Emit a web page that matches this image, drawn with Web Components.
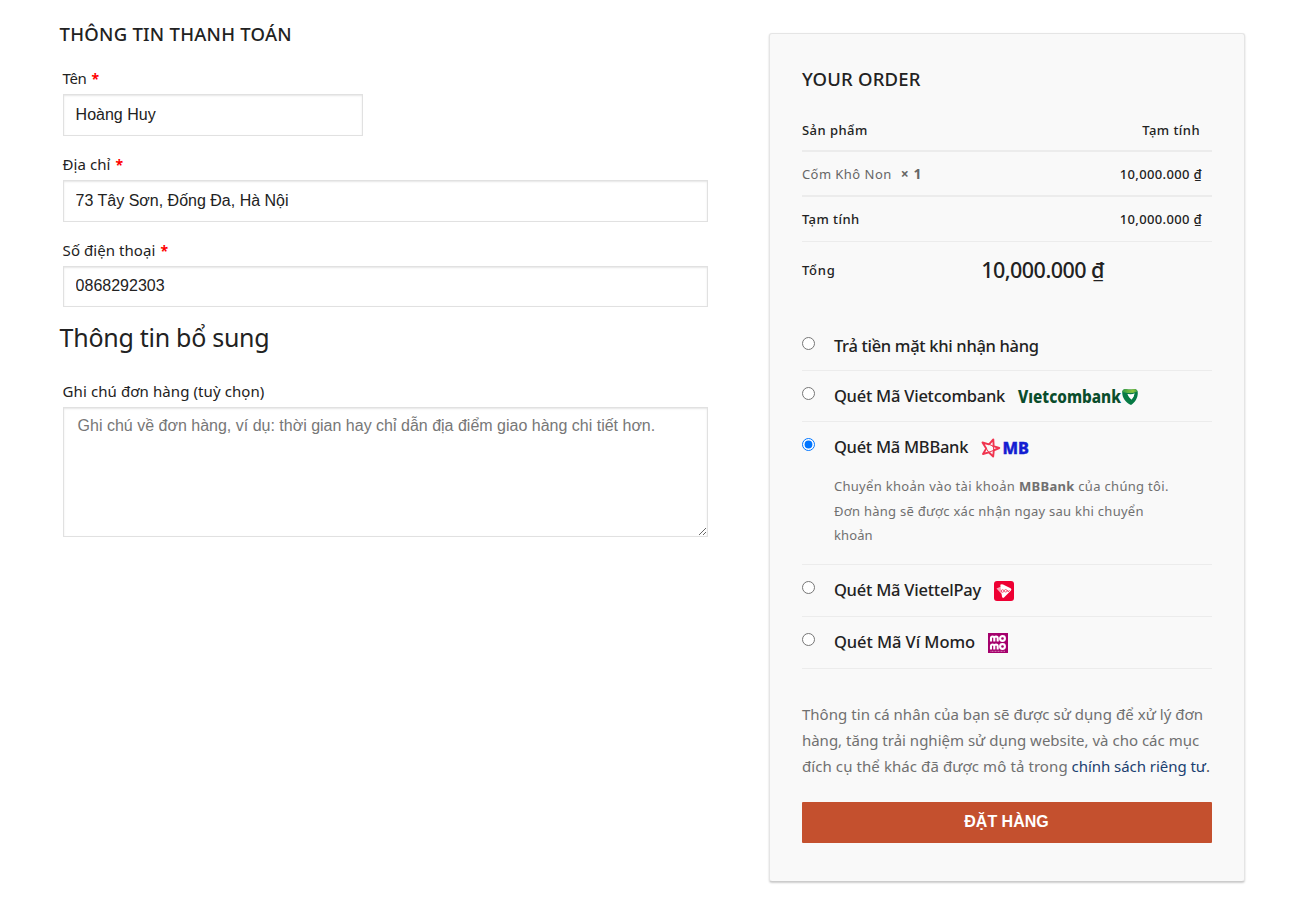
<!DOCTYPE html>
<html lang="vi">
<head>
<meta charset="utf-8">
<title>Thanh toán</title>
<style>
html,body{margin:0;padding:0;background:#fff}
body{font-family:"Noto Sans","Open Sans",sans-serif;color:#222;height:900px;overflow:hidden}
</style>
</head>
<body>
<checkout-page></checkout-page>
<script>
const define=(name,html,setup)=>customElements.define(name,class extends HTMLElement{
  connectedCallback(){
    if(this.shadowRoot)return;
    const t=document.createElement('template');
    t.innerHTML=html;
    this.attachShadow({mode:'open'}).append(t.content.cloneNode(true));
    if(setup)setup(this,this.shadowRoot);
  }
});

/* A single line of text tracked to the width given in "w". */
define('fit-text',`<style>:host{display:inline-block;white-space:nowrap;margin-left:var(--nudge,-.4px)}span{display:inline-block}</style><span><slot></slot></span>`,(el,root)=>{
  queueMicrotask(()=>{
    const s=root.querySelector('span'),n=[...el.textContent].length,w=+el.getAttribute('w')-.2;
    s.style.letterSpacing='0px';
    s.style.letterSpacing=((w-s.getBoundingClientRect().width)/n).toFixed(3)+'px';
    s.style.width=w+'px';
  });
});

define('form-field',`<style>
:host{display:block;padding:0 3px}
.l{display:block;font-size:15px;line-height:24px;height:28px}
.l b{color:#f00;margin-left:5px;font-size:14px}
input,textarea{display:block;box-sizing:border-box;width:var(--w,100%);height:var(--h,42px);margin:0;border:1px solid #e1e1e1;border-radius:0;
 background:#fff;color:#222;font:16px/20px "Liberation Sans",Arial,sans-serif;padding:0 11.600px 1px;box-shadow:inset 0 1px 2px rgba(0,0,0,.1);outline:0}
textarea{padding:8px 13.600px;line-height:20px;resize:both}
::placeholder{color:#777;opacity:1}
</style><label class="l"><slot></slot></label>`,(el,root)=>{
  if(el.hasAttribute('required')){const b=document.createElement('b');b.textContent='*';root.querySelector('label').append(b)}
  const area=el.hasAttribute('placeholder'),c=document.createElement(area?'textarea':'input');
  if(area)c.placeholder=el.getAttribute('placeholder');else c.value=el.getAttribute('value');
  root.append(c);
});

define('order-row',`<style>
:host{display:flex;justify-content:space-between;align-items:center;box-sizing:border-box;font-size:13px;line-height:20px;font-weight:500;border-bottom:1px solid #ececec}
</style><slot></slot>`);

define('pay-option',`<style>
:host{display:block;border-bottom:1px solid #ececec;box-sizing:border-box}
.r{display:flex;align-items:flex-start}
input{width:13px;height:13px;margin:var(--rt,16px) 19px 0 0;flex:none}
.t{display:flex;align-items:center;gap:13px;font-size:16.500px;font-weight:500;line-height:26px;margin-top:var(--tt,12px)}
::slotted([slot=logo]){margin-top:2px}
.d{margin:14px 0 0 32px;font-size:13px;line-height:24.500px;color:#707070}
</style><div class="r"><input type="radio" name="p"><div class="t"><slot></slot><slot name="logo"></slot></div></div><div class="d"><slot name="note"></slot></div>`,(el,root)=>{
  root.querySelector('input').checked=el.hasAttribute('checked');
  if(!el.querySelector('[slot=note]'))root.querySelector('.d').remove();
});

const svg=(w,h,body)=>`<style>:host{display:block;height:${h}px}svg{display:block;overflow:visible}</style><svg width="${w}" height="${h}" viewBox="0 0 ${w} ${h}">${body}</svg>`;

define('vcb-logo',svg(120,18,`
<defs><linearGradient id="g" x1="0" x2="1"><stop offset="0" stop-color="#2f9a45"/><stop offset=".7" stop-color="#8dc63f"/><stop offset="1" stop-color="#3c9b45"/></linearGradient></defs>
<text x="0" y="15" font-family="Noto Sans" font-weight="800" font-size="17" fill="#0a4d2c" textLength="103" lengthAdjust="spacingAndGlyphs">Vıetcombank</text>
<path fill="#077a45" fill-rule="evenodd" d="M104.200 4 Q104.500 1.200 108 1 Q112 2 116 1 Q119.800 1 119.800 5 C119.800 10 117 14.500 113 17 C107.500 14.500 104.200 10 104.200 4 Z M109.500 6 Q110.500 9 113.500 11.500 Q115.800 9 116.500 5.500 Q113 7 109.500 6Z"/>
<path fill="url(#g)" d="M104.200 4 Q104.500 1.200 108 1 Q112 2 116 1 Q119 1 119.500 3.500 Q113 6 107 4.500 Z"/>
<path fill="#fff" d="M109.500 6 Q110.500 9 113.500 11.500 Q115.800 9 116.500 5.500 Q113 7 109.500 6Z"/>`));

define('mb-logo',svg(48,20,`
<g fill="none" stroke="#f0344f" stroke-width="1.900" stroke-linejoin="round" stroke-linecap="round"><path d="M1.500 4.500 L8 6.300 M8 6.300 L12.300 1.500 L12.600 7 M12.300 8.200 L18.300 10 L13.500 12 M12.800 12.300 L12.200 18.500 L8.500 15 M7.800 14.300 L2 16 L4.500 11.800 M5.200 10.500 L1.500 4.500"/><path stroke-width="1" d="M8 6.300 L12.300 8.200 L12.800 12.300 L7.800 14.300 L5.200 10.500"/></g>
<text x="21.500" y="15.500" font-family="Noto Sans" font-weight="800" font-size="16" fill="#141ed2" stroke="#141ed2" stroke-width=".4" textLength="26.500" lengthAdjust="spacingAndGlyphs">MB</text>`));

define('viettel-logo',svg(20,20,`
<rect width="20" height="20" rx="3" fill="#ee0033"/>
<path fill="#fff" d="M6.300 3.800 Q7.500 2.700 9 3.500 L16.600 7.300 Q18 8.300 17 9.500 L10 16.600 Q8.500 17.600 8 15.800Z"/>
<path fill="#fff" opacity=".65" d="M2.500 7.500 L7 5.500 L8 13.500Z"/>
<g fill="none" stroke="#ee0033" stroke-width=".6"><circle cx="8.600" cy="10" r="1.300"/><circle cx="11.700" cy="9.800" r="1.300"/><path d="M13.200 9 l1 2 l1.300 -2"/></g>`));

define('momo-logo',svg(20,20,`
<rect width="20" height="20" fill="#a5006c"/>
<g fill="none" stroke="#fff" stroke-width="2.100"><path d="M3 8.500 V5 Q3 3.500 4.600 3.500 T6.300 5 V8.500 M6.300 5 Q6.300 3.500 8 3.500 T9.700 5 V8.500"/><circle cx="14.500" cy="5.500" r="2.400"/><path d="M3 16.500 V13 Q3 11.500 4.600 11.500 T6.300 13 V16.500 M6.300 13 Q6.300 11.500 8 11.500 T9.700 13 V16.500"/><circle cx="14.500" cy="13.500" r="2.400"/></g>
<path d="M2.500 18.300H17.500" stroke="#e3a6cb" stroke-width=".8" stroke-dasharray="1 .5"/>`));

define('order-card',`<style>
:host{--nudge:-.1px;display:block;box-sizing:border-box;width:476px;height:849px;margin-top:33px;border:1px solid #e5e5e5;border-bottom-color:#ccc;border-radius:3px;background:#f9f9f9;padding:32px;box-shadow:0 1px 2px rgba(0,0,0,.2)}
h3{margin:0;font-size:18.500px;font-weight:500;line-height:26px;height:44px}
.grey{color:#666;font-weight:400}.grey b{margin-left:9px;font-size:14px;letter-spacing:.6px}
.p{margin:32px 0 0;font-size:15px;line-height:26px;color:#707070}
.a{color:#1b3f70}.dot{color:#555}
button{display:block;width:410px;height:41px;margin:23px 0 0;padding:0 1px 2px 0;border:0;border-radius:1px;background:#c4502e;color:#fff;font:bold 16px "Liberation Sans",Arial,sans-serif}
</style>
<h3><fit-text w="119">YOUR ORDER</fit-text></h3>
<order-row style="height:42px;border-bottom-width:2px;padding-right:12px"><fit-text w="66">Sản phẩm</fit-text><fit-text w="58">Tạm tính</fit-text></order-row>
<order-row style="height:45px;border-bottom-width:2px;padding-right:10px"><span class="grey"><fit-text w="90">Cốm Khô Non</fit-text><b>× 1</b></span><fit-text w="82.500">10,000.000 ₫</fit-text></order-row>
<order-row style="height:45px;padding-right:10px"><fit-text w="58">Tạm tính</fit-text><fit-text w="82.500">10,000.000 ₫</fit-text></order-row>
<order-row style="height:78px;border:0;padding:0 108px 22px 0"><fit-text w="34">Tổng</fit-text><fit-text w="123" style="font-size:21.5px">10,000.000 ₫</fit-text></order-row>
<pay-option style="height:51px;--rt:17px;--tt:13px"><fit-text w="205">Trả tiền mặt khi nhận hàng</fit-text></pay-option>
<pay-option style="height:51px"><fit-text w="171.400">Quét Mã Vietcombank</fit-text><vcb-logo slot="logo"></vcb-logo></pay-option>
<pay-option style="height:143px" checked><fit-text w="134.400">Quét Mã MBBank</fit-text><mb-logo slot="logo"></mb-logo>
<div slot="note"><fit-text w="335">Chuyển khoản vào tài khoản <b>MBBank</b> của chúng tôi.</fit-text><br><fit-text w="310">Đơn hàng sẽ được xác nhận ngay sau khi chuyển</fit-text><br><fit-text w="39">khoản</fit-text></div></pay-option>
<pay-option style="height:52px"><fit-text w="147.300">Quét Mã ViettelPay</fit-text><viettel-logo slot="logo"></viettel-logo></pay-option>
<pay-option style="height:52px"><fit-text w="141.300">Quét Mã Ví Momo</fit-text><momo-logo slot="logo"></momo-logo></pay-option>
<div class="p"><fit-text w="401.500">Thông tin cá nhân của bạn sẽ được sử dụng để xử lý đơn</fit-text><br><fit-text w="397.500">hàng, tăng trải nghiệm sử dụng website, và cho các mục</fit-text><br><fit-text w="270">đích cụ thể khác đã được mô tả trong&nbsp;</fit-text><fit-text w="138.500"><span class="a">chính sách riêng tư</span><span class="dot">.</span></fit-text></div>
<button>ĐẶT HÀNG</button>`);

define('checkout-page',`<style>
:host{display:grid;grid-template-columns:709px 476px;align-items:start;padding-left:60px;height:900px}
.left{width:651px;padding-top:20px}
h3{margin:0;font-size:18.500px;font-weight:500;line-height:28px;height:46px}
h2{margin:0;font-size:25px;font-weight:400;line-height:36px;height:60px;padding-top:12px}
form-field+form-field{margin-top:16px}
</style>
<div class="left">
<h3><fit-text w="232.500">THÔNG TIN THANH TOÁN</fit-text></h3>
<form-field required value="Hoàng Huy" style="--w:300px"><fit-text w="24">Tên</fit-text></form-field>
<form-field required value="73 Tây Sơn, Đống Đa, Hà Nội"><fit-text w="48">Địa chỉ</fit-text></form-field>
<form-field required value="0868292303" style="--h:41px"><fit-text w="93">Số điện thoại</fit-text></form-field>
<h2><fit-text w="210">Thông tin bổ sung</fit-text></h2>
<form-field style="--h:130px" placeholder="Ghi chú về đơn hàng, ví dụ: thời gian hay chỉ dẫn địa điểm giao hàng chi tiết hơn."><fit-text w="202">Ghi chú đơn hàng (tuỳ chọn)</fit-text></form-field>
</div>
<order-card></order-card>`);
</script>
</body>
</html>
